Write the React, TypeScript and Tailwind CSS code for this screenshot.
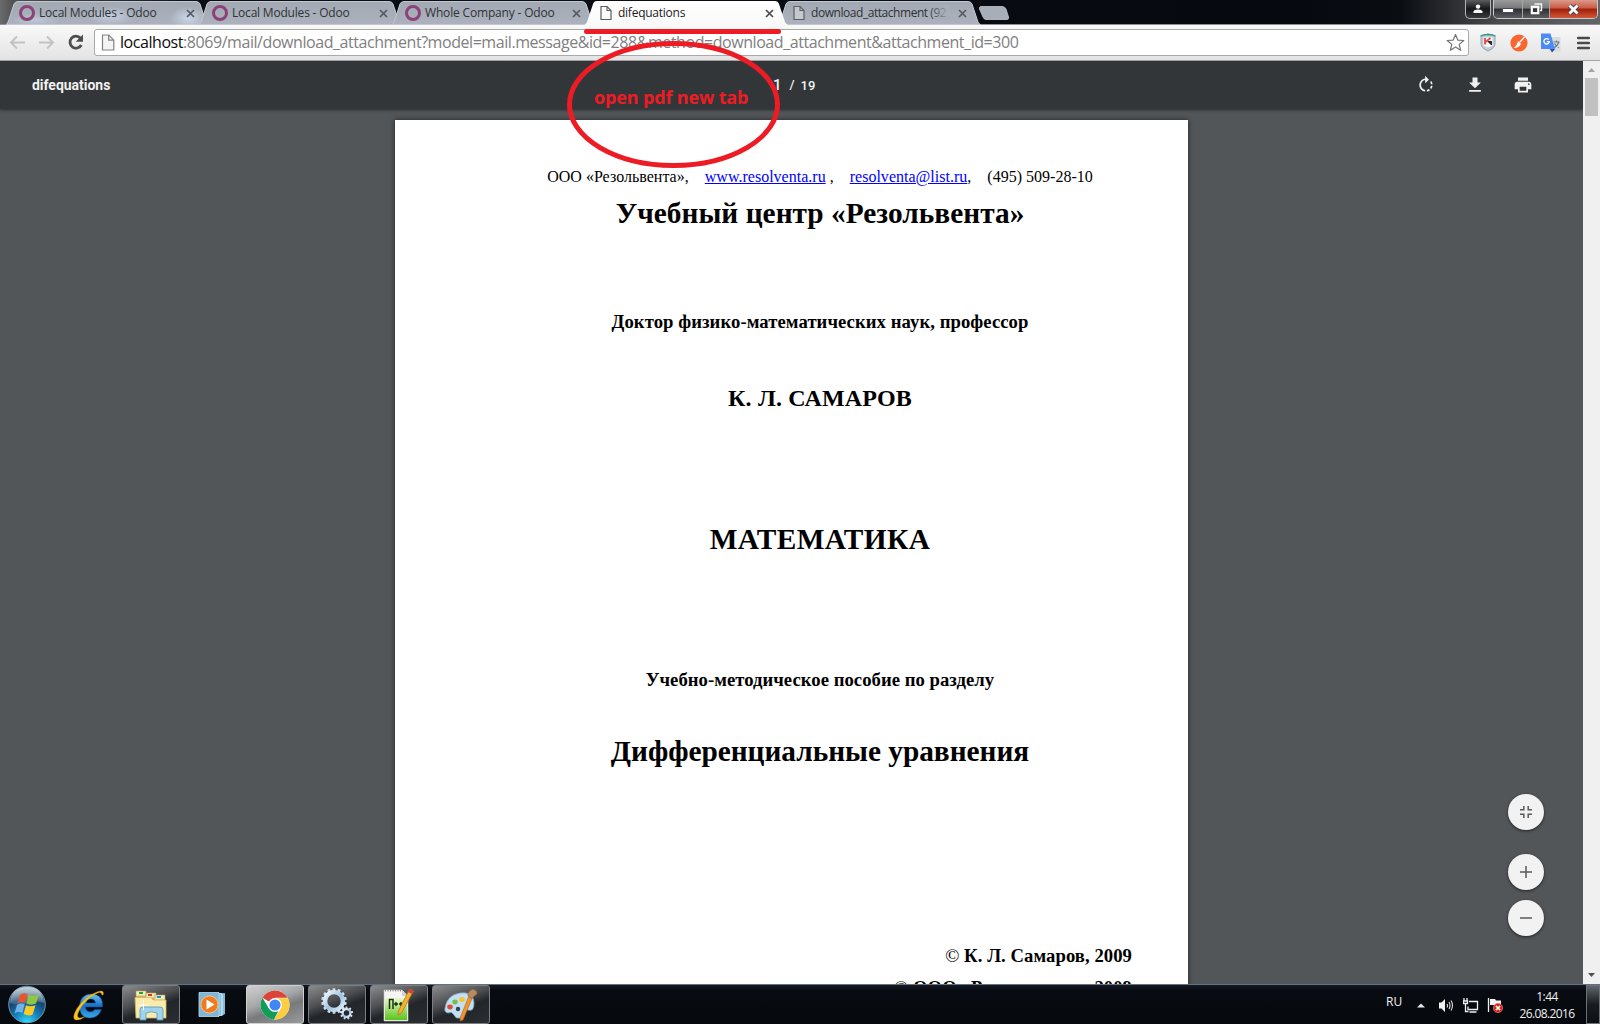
import React from "react";

const UI = "font-['Open_Sans',sans-serif]";

function FileIcon({ className = "" }: { className?: string }) {
  return (
    <svg width="12" height="16" viewBox="0 0 12 16" className={className}>
      <path d="M1 1.500h6l4 4v9H1z" fill="#fafafa" fillOpacity=".35" stroke="#5d5d5d" strokeWidth="1.2" />
      <path d="M7 1.500v4h4" fill="none" stroke="#5d5d5d" strokeWidth="1.100" />
    </svg>
  );
}

function Close({ color }: { color: string }) {
  return (
    <svg width="9" height="9" viewBox="0 0 9 9" className="shrink-0">
      <path d="M1 1l7 7M8 1L1 8" stroke={color} strokeWidth="1.700" />
    </svg>
  );
}

type TabProps = { title: string; kind: "odoo" | "file"; active?: boolean; fade?: boolean; light?: boolean; tracking: string };

function Tab({ title, kind, active, fade, light, tracking }: TabProps) {
  return (
    <div className={"relative h-[24px] w-[193px] shrink-0 " + (active ? "z-10" : "")}>
      <svg width="203" height="25" viewBox="0 0 203 25" className="absolute top-0 left-0">
        <defs>
          <linearGradient id="tabIdle" x1="0" y1="0" x2="0" y2="1">
            <stop offset="0" stopColor="#a3a9b3" />
            <stop offset="1" stopColor="#acb2bd" />
          </linearGradient>
          <linearGradient id="tabActive" x1="0" y1="0" x2="0" y2="1">
            <stop offset="0" stopColor="#ffffff" />
            <stop offset="1" stopColor="#f9f9f9" />
          </linearGradient>
          <radialGradient id="tabGlow">
            <stop offset="0" stopColor="#c9d6e8" />
            <stop offset="1" stopColor="#c9d6e8" stopOpacity="0" />
          </radialGradient>
        </defs>
        <path
          d={
            active
              ? "M-1 25Q1 24 2 22L8 4Q9 1 12 1H190Q193 1 194 4L200 22Q201 24 203 25Z"
              : "M0 24.500Q1.500 23.500 2.500 21L8 4Q9 1.500 12 1.500H190Q193 1.500 194 4L200 22Q201 24 202.500 24.500Z"
          }
          fill={active ? "url(#tabActive)" : "url(#tabIdle)"}
          stroke={active ? "none" : "#c3c8d0"}
          strokeWidth="1"
        />
        {light && (
          <g>
            <ellipse cx="30" cy="20" rx="24" ry="7" fill="url(#tabGlow)" opacity=".6" />
            <ellipse cx="105" cy="16" rx="24" ry="9" fill="url(#tabGlow)" opacity=".8" />
            <ellipse cx="182" cy="18" rx="18" ry="11" fill="url(#tabGlow)" />
          </g>
        )}
      </svg>
      <div className="relative flex h-[24px] items-center pt-[2px] pl-[13px]">
        {kind === "odoo" ? (
          <span className="h-[16px] w-[16px] shrink-0 rounded-full border-[3.500px] border-[#8b4278]" />
        ) : (
          <FileIcon className="mx-[2px] shrink-0" />
        )}
        <span
          className={
            "relative ml-[4px] w-[139px] text-[12px] leading-[16px] whitespace-nowrap " + UI + " " + tracking + (active ? " text-[#1c1c1c]" : " text-[#2f3236]")
          }
        >
          {title}
          {fade && <span className="absolute top-0 right-0 h-full w-[22px] bg-gradient-to-r from-transparent to-[#a8aeb8]" />}
        </span>
        <span className="ml-[8px] flex">
          <Close color={active ? "#4c4c4c" : "#565960"} />
        </span>
      </div>
    </div>
  );
}

function WindowControls() {
  return (
    <div className="absolute top-0 right-[2px] flex h-[19px] gap-[2px]">
      <div className="flex h-[19px] w-[26px] items-center justify-center rounded-b-[5px] border border-t-0 border-[#b5b5b5] bg-gradient-to-b from-[#5c5d5f] via-[#15171a] to-[#3b3d40]">
        <svg width="10" height="10" viewBox="0 0 10 10">
          <circle cx="5" cy="2.600" r="2.200" fill="#fff" />
          <path d="M.5 9V7.500Q1 5.500 5 5.500T9.500 7.500V9z" fill="#fff" />
        </svg>
      </div>
      <div className="flex h-[19px] w-[105px] overflow-hidden rounded-b-[5px] border border-t-0 border-[#c9c9c9]">
        <div className="flex w-[29px] items-center justify-center border-r border-[#a5a5a5] bg-[linear-gradient(180deg,#9b9b9b_0%,#77787a_45%,#2c2d30_50%,#5c5e60_100%)]">
          <span className="mt-[3px] h-[5px] w-[12px] rounded-[1px] border border-[#444a5c] bg-white" />
        </div>
        <div className="flex w-[27px] items-center justify-center border-r border-[#a5a5a5] bg-[linear-gradient(180deg,#9b9b9b_0%,#77787a_45%,#2c2d30_50%,#5c5e60_100%)]">
          <svg width="13" height="12" viewBox="0 0 13 12">
            <path d="M4.500 1h7v6.500H10" fill="none" stroke="#f5f5f5" strokeWidth="1.400" />
            <rect x="1.800" y="3.800" width="6.500" height="6.400" fill="none" stroke="#fff" strokeWidth="2.200" />
          </svg>
        </div>
        <div className="flex grow items-center justify-center bg-[linear-gradient(180deg,#dc9a8c_0%,#c85a44_45%,#a01f08_50%,#d0573b_100%)]">
          <svg width="13" height="11" viewBox="0 0 13 11">
            <path d="M2.500 1.500l8 8M10.500 1.500l-8 8" stroke="#4d4450" strokeWidth="4.600" />
            <path d="M2.500 1.500l8 8M10.500 1.500l-8 8" stroke="#fff" strokeWidth="2.800" />
          </svg>
        </div>
      </div>
    </div>
  );
}

function TabStrip() {
  return (
    <div className="relative flex h-[24px] shrink-0 bg-[linear-gradient(90deg,#6a6b6c_0px,#4f5052_14px,#0a0e15_200px,#060a10_1300px,#0a0d12_1400px,#4a4b4d_1500px,#626466_1600px)] pl-[6px]">
      <Tab title="Local Modules - Odoo" kind="odoo" light tracking="tracking-[-0.2px]" />
      <Tab title="Local Modules - Odoo" kind="odoo" tracking="tracking-[-0.2px]" />
      <Tab title="Whole Company - Odoo" kind="odoo" tracking="tracking-[-0.17px]" />
      <Tab title="difequations" kind="file" active tracking="tracking-[-0.25px]" />
      <Tab title="download_attachment (92" kind="file" fade tracking="tracking-[-0.45px]" />
      <svg width="32" height="16" viewBox="0 0 32 16" className="mt-[5px] ml-[7px]">
        <path d="M3 1.500H24Q27 1.500 28 4L30.500 12Q31 14.500 29 14.500H8Q6 14.500 5 12L1.500 4Q1 1.500 3 1.500Z" fill="#a8aeb8" stroke="#c0c5cd" strokeWidth=".8" />
      </svg>
      <WindowControls />
    </div>
  );
}

function AddressBar() {
  return (
    <div className="flex h-[37px] shrink-0 items-center border-t border-b border-t-[#8d8f92] border-b-[#a3a3a3] bg-gradient-to-b from-[#f9f9f9] to-[#e3e3e3]">
      <svg width="94" height="35" viewBox="0 0 94 35" className="shrink-0">
        <g fill="none" stroke="#c3c3c3" strokeWidth="2">
          <path d="M25 17.500H11.500M17 11.500l-6 6 6 6" />
          <path d="M39 17.500h13.500M47 11.500l6 6-6 6" />
        </g>
        <path d="M80.500 13.200A6 6 0 1 0 81.300 20" fill="none" stroke="#4d4d4d" strokeWidth="2.800" />
        <path d="M83 9.500v7.200h-7.300z" fill="#4d4d4d" />
      </svg>
      <div className="flex h-[27px] w-[1375px] shrink-0 items-center rounded-[3px] border border-[#a9a9a9] bg-white pr-[3px] pl-[6px]">
        <svg width="14" height="17" viewBox="0 0 14 17" className="shrink-0">
          <path d="M1.500 1h6.300l5 5.200V16h-11.300z" fill="#f4f4f4" stroke="#828282" strokeWidth="1.200" />
          <path d="M7.700 1v5.200h5" fill="none" stroke="#828282" strokeWidth="1.200" />
        </svg>
        <span className={"-mt-px ml-[5px] grow text-[16px] leading-[24px] tracking-[-0.440px] whitespace-nowrap text-[#808080] " + UI}>
          <span className="text-[#0c0c0c]">localhost</span>:8069/mail/download_attachment?model=mail.message&amp;id=288&amp;method=download_attachment&amp;attachment_id=300
        </span>
        <svg width="19" height="19" viewBox="0 0 19 19" className="shrink-0">
          <path d="M9.500 1.500l2.300 5.600 6 .4-4.600 3.900 1.500 5.900-5.200-3.200-5.200 3.200 1.500-5.900L1.200 7.500l6-.4z" fill="#fff" stroke="#747474" strokeWidth="1.200" strokeLinejoin="round" />
        </svg>
      </div>
      <svg width="16" height="19" viewBox="0 0 16 19" className="ml-[11px] shrink-0">
        <path d="M1 2.500Q8-.5 15 2.500V11Q15 15 8 18Q1 15 1 11z" fill="#c3cdd3" stroke="#8b9ba3" strokeWidth=".8" />
        <path d="M.5 2.500Q8-1 15.500 2.500V3.500Q8 1 .5 3.500z" fill="#1c9a87" />
        <path d="M3.500 4.500h9v8l-4.500 2-4.500-2z" fill="#fbfbfb" />
        <path d="M5 5v6.500M10.500 5L5.500 9" fill="none" stroke="#e8454a" strokeWidth="1.800" />
        <path d="M8 8.500h3.500v3.500z" fill="#222" stroke="#222" />
      </svg>
      <svg width="18" height="18" viewBox="0 0 18 18" className="ml-[14px] shrink-0">
        <circle cx="9" cy="9" r="8.600" fill="#fb6530" />
        <path d="M14.500 3L9.500 8.500" stroke="#fff" strokeWidth="1.300" />
        <path d="M8 7l3 3Q9.500 14 3.500 14Q7 12 8 7z" fill="#fff" />
      </svg>
      <svg width="20" height="20" viewBox="0 0 20 20" className="ml-[13px] shrink-0">
        <rect x="8" y="4" width="11.500" height="14.500" fill="#dcdcdc" />
        <path d="M12.500 9h6M15.500 7.500V9M18 9q-1.500 4-5 6M13.500 10.500q2 3 4.500 4" fill="none" stroke="#607d8b" strokeWidth="1.200" />
        <path d="M0 .5h9.500l4.500 15.500H0z" fill="#4c8bf5" />
        <path d="M9 16h5l-3 3.500z" fill="#3048b0" />
        <path d="M7.800 6.700a2.700 2.700 0 1 0 .5 2H5.800" fill="none" stroke="#fff" strokeWidth="1.300" />
      </svg>
      <svg width="13" height="14" viewBox="0 0 13 14" className="ml-[16px] shrink-0">
        <path d="M1 2h11M1 7h11M1 12h11" stroke="#4a4a4a" strokeWidth="2.500" strokeLinecap="round" />
      </svg>
    </div>
  );
}

function ViewerToolbar() {
  return (
    <div className="relative z-10 flex h-[48px] shrink-0 items-center bg-[#323639] font-['Roboto',sans-serif] font-bold text-[#f1f1f1] shadow-[0_1px_3px_rgba(0,0,0,0.5)]">
      <span className="w-[773px] pl-[32px] text-[14px] leading-[20px] tracking-[-0.020px]">difequations</span>
      <span className="text-[15px] leading-[20px] font-medium">1</span>
      <span className="ml-[8px] text-[13px] font-medium">/</span>
      <span className="ml-[6px] grow pt-px text-[13px] font-medium">19</span>
      <svg width="20" height="20" viewBox="0 0 24 24" className="mr-[29px]" fill="#f1f1f1">
        <path d="M15.550 5.550L11 1v3.070C7.060 4.560 4 7.920 4 12s3.050 7.440 7 7.930v-2.020c-2.840-.48-5-2.940-5-5.910s2.160-5.430 5-5.910V10l4.550-4.450zM19.930 11c-.17-1.390-.72-2.730-1.620-3.890l-1.420 1.420c.54.75.88 1.600 1.020 2.470h2.020zM13 17.900v2.020c1.390-.17 2.740-.71 3.900-1.610l-1.440-1.440c-.75.54-1.590.89-2.460 1.030zm3.890-2.420l1.420 1.410c.9-1.160 1.450-2.500 1.620-3.890h-2.020c-.14.87-.48 1.720-1.020 2.480z" />
      </svg>
      <svg width="20" height="20" viewBox="0 0 24 24" className="mr-[28px]" fill="#f1f1f1">
        <path d="M19 9h-4V3H9v6H5l7 7 7-7zM5 18v2h14v-2H5z" />
      </svg>
      <svg width="20" height="20" viewBox="0 0 24 24" className="mr-[50px]" fill="#f1f1f1">
        <path d="M19 8H5c-1.660 0-3 1.340-3 3v6h4v4h12v-4h4v-6c0-1.660-1.340-3-3-3zm-3 11H8v-5h8v5zm3-7c-.55 0-1-.45-1-1s.45-1 1-1 1 .45 1 1-.45 1-1 1zm-1-9H6v4h12V3z" />
      </svg>
    </div>
  );
}

function Document() {
  return (
    <div className="mt-[11px] ml-[395px] h-[880px] w-[793px] bg-white pt-[41px] pr-[56px] pl-[113px] text-center font-['Liberation_Serif',serif] leading-[32px] whitespace-nowrap text-black shadow-[0_0_5px_rgba(0,0,0,0.6)]">
      <div className="h-8 text-[16px] tracking-[0.01px] whitespace-pre">
        {"ООО «Резольвента»,    "}
        <a className="text-[#0000ff] underline">www.resolventa.ru</a>
        {" ,    "}
        <a className="text-[#0000ff] underline">resolventa@list.ru</a>
        {",    (495) 509-28-10"}
      </div>
      <div className="mt-[4px] h-8 text-[29.330px] font-bold tracking-[0.03px]">Учебный центр «Резольвента»</div>
      <div className="mt-[77px] h-8 text-[18.670px] font-bold tracking-[0.07px]">Доктор физико-математических наук, профессор</div>
      <div className="mt-[44px] h-8 text-[24px] font-bold tracking-[0.15px]">К. Л. САМАРОВ</div>
      <div className="mt-[109px] h-8 text-[29.330px] font-bold tracking-[0.4px]">МАТЕМАТИКА</div>
      <div className="mt-[109px] h-8 text-[18.670px] font-bold tracking-[0.04px]">Учебно-методическое пособие по разделу</div>
      <div className="mt-[39px] h-8 text-[29.330px] font-bold tracking-[-0.02px]">Дифференциальные уравнения</div>
      <div className="mt-[173px] h-8 text-right text-[18.670px] font-bold tracking-[0.06px]">
        <span className="font-normal">©</span> К. Л. Самаров, 2009
      </div>
      <div className="h-8 text-right text-[18.670px] font-bold tracking-[0.06px]">
        <span className="font-normal">©</span> ООО «Резольвента», 2009
      </div>
    </div>
  );
}

function ZoomButtons() {
  const base = "flex h-[36px] w-[36px] items-center justify-center rounded-full bg-[#f2f2f2] shadow-[0_1px_3px_rgba(0,0,0,0.6)]";
  return (
    <div className="absolute top-[733px] left-[1508px] flex flex-col">
      <div className={base}>
        <svg width="12" height="12" viewBox="0 0 12 12" fill="none" stroke="#5a5a5a" strokeWidth="1.500">
          <path d="M0 3.800h3.800V0M8.200 0v3.800H12M0 8.200h3.800V12M8.200 12V8.200H12" />
        </svg>
      </div>
      <div className={base + " mt-[24px]"}>
        <svg width="12" height="12" viewBox="0 0 12 12" stroke="#5a5a5a" strokeWidth="1.500">
          <path d="M6 0v12M0 6h12" />
        </svg>
      </div>
      <div className={base + " mt-[10px]"}>
        <svg width="12" height="12" viewBox="0 0 12 12" stroke="#5a5a5a" strokeWidth="1.500">
          <path d="M0 6h12" />
        </svg>
      </div>
    </div>
  );
}

function Scrollbar() {
  return (
    <div className="flex w-[17px] shrink-0 flex-col items-center bg-[#f0f0f0]">
      <svg width="17" height="17" viewBox="0 0 17 17">
        <path d="M5 11l3.500-4 3.500 4z" fill="#a3a3a3" />
      </svg>
      <div className="h-[38px] w-[13px] bg-[#c1c1c1]" />
      <svg width="17" height="17" viewBox="0 0 17 17" className="mt-auto">
        <path d="M5 6l3.500 4L12 6z" fill="#505050" />
      </svg>
    </div>
  );
}

function Slot({ children, bright }: { children: React.ReactNode; bright?: boolean }) {
  return (
    <div
      className={
        "flex h-[39px] w-[58px] shrink-0 items-center justify-center rounded-[3px] border " +
        (bright
          ? "border-[#d0d0d0] bg-[linear-gradient(160deg,#d0d0d0_0%,#a6a7a8_40%,#77797a_60%,#989a9b_100%)]"
          : "border-[#7c7e81] bg-[linear-gradient(160deg,#8b8c8e_0%,#4a4c4f_40%,#22262a_58%,#2a2e31_100%)]")
      }
    >
      {children}
    </div>
  );
}

type GearProps = { cx: number; cy: number; r: number; ring: number; teeth: number; tooth: number };

function Gear({ cx, cy, r, ring, teeth, tooth }: GearProps) {
  const angles = Array.from({ length: teeth }, (_, i) => (i * 360) / teeth);
  return (
    <g>
      {angles.map((a) => (
        <rect key={a} x={cx - tooth / 2} y={cy - r} width={tooth} height={ring} rx=".5" fill="#cfe0ec" transform={`rotate(${a} ${cx} ${cy})`} />
      ))}
      <circle cx={cx} cy={cy} r={r - ring / 2 - 1.2} fill="none" stroke="url(#gearFill)" strokeWidth={ring - 1} />
    </g>
  );
}

function Taskbar() {
  return (
    <div className={"relative z-20 flex h-[40px] shrink-0 items-center border-t border-[#64707c] bg-[linear-gradient(180deg,#141923_0%,#080b11_15%,#05080c_100%)] text-[#f0f0f0] " + UI}>
      <svg width="40" height="39" viewBox="0 0 40 39" className="ml-[7px] shrink-0">
        <defs>
          <radialGradient id="orb" cx=".5" cy="1" r=".95">
            <stop offset="0" stopColor="#37e0ff" />
            <stop offset=".35" stopColor="#1585c2" />
            <stop offset=".7" stopColor="#16446f" />
            <stop offset="1" stopColor="#5d8096" />
          </radialGradient>
          <linearGradient id="gloss" x1="0" y1="0" x2="0" y2="1">
            <stop offset="0" stopColor="#fff" stopOpacity=".65" />
            <stop offset="1" stopColor="#fff" stopOpacity=".12" />
          </linearGradient>
        </defs>
        <circle cx="20" cy="19.500" r="18.300" fill="url(#orb)" stroke="#6f97ad" strokeWidth="1" />
        <path d="M3 18Q4 2 20 2T37 18Q28 15 20 18T3 18z" fill="url(#gloss)" />
        <path d="M13 10Q17 7 20.500 9.200L18 18Q14 16 10.500 18.500z" fill="#e8552c" />
        <path d="M21.500 9.800Q26 12 32 9.500L29 18.500Q24 20.800 19.400 18.500z" fill="#8fc73e" />
        <path d="M10 20Q14 17.500 17.700 19.500L15.200 28Q11.500 26 7.500 28.500z" fill="#6fb3ea" />
        <path d="M19 20.200Q23.500 22.500 28.500 20.200L25.700 29.500Q21.500 31.500 16.600 29z" fill="#fcc927" />
      </svg>
      <svg width="36" height="36" viewBox="0 0 36 36" className="ml-[24px] shrink-0">
        <defs>
          <linearGradient id="ie" x1="0" y1="0" x2="0" y2="1">
            <stop offset="0" stopColor="#6cc4f4" />
            <stop offset=".5" stopColor="#176fc4" />
            <stop offset="1" stopColor="#38a8ec" />
          </linearGradient>
        </defs>
        <path d="M31.500 20H14.500Q14.800 24.800 19.300 24.800Q22.500 24.800 23.700 22.500H30.500Q27.500 31 18.500 31Q8.500 30.500 8.500 19.500Q9 7.500 20.500 7Q32.500 7.500 31.500 20zM15 16H24.500Q24 12 19.800 12T15 16z" fill="url(#ie)" stroke="#0d4a90" strokeWidth=".5" />
        <path d="M32 8Q34 2 26 5Q14 9.500 6 21.500Q0 32 5 33Q9 33.500 14 29.500Q7 32.500 6.500 29Q6.500 25 12 17.500Q20 8 28 5.500Q31 5 31 8z" fill="#f8c41c" stroke="#d49708" strokeWidth=".4" />
      </svg>
      <div className="ml-[15px] flex">
        <Slot>
          <svg width="34" height="32" viewBox="0 0 34 32">
            <path d="M2 4h9l2 2h18v22H2z" fill="#d9b75c" />
            <path d="M2 2h10v5H2zM12 4h10v5H12zM20 6h11v5H20z" fill="#f6eebb" stroke="#bca052" strokeWidth=".6" />
            <path d="M5 3h4v2H5z" fill="#1ea63a" />
            <path d="M14 5h4v2h-4z" fill="#d03620" />
            <path d="M23 7h4v2h-4z" fill="#2a88dc" />
            <path d="M1 8.500h16l2 2.500h13V29H2z" fill="#f9ebab" stroke="#d8b85c" strokeWidth=".8" />
            <path d="M6 31V20.500Q6 18 9 18H26Q29 18 29 20.500V31H23V24Q17.500 21.500 12 24V31z" fill="#9fd3ee" stroke="#5097c0" strokeWidth=".8" />
            <path d="M9.500 11v10M4.500 16h10" stroke="#fff" strokeWidth="1" />
          </svg>
        </Slot>
      </div>
      <svg width="28" height="28" viewBox="0 0 28 28" className="ml-[18px] shrink-0">
        <path d="M8 2h19v21l-3 2H8z" fill="#5e9fc4" />
        <path d="M6 2.500h17.500v22H6zM24.500 3v21M26 3v20" fill="#88bfdd" stroke="#c4e4f3" strokeWidth=".8" />
        <path d="M1 1.500h20v24H1z" fill="#7db6d8" stroke="#b5dcf0" strokeWidth=".8" />
        <circle cx="11.500" cy="13.500" r="8.600" fill="#f07a1e" stroke="#ffc490" strokeWidth="1" />
        <path d="M8.500 8.500l8 5-8 5z" fill="#fff" />
      </svg>
      <div className="ml-[20px] flex gap-[4px]">
        <Slot bright>
          <svg width="30" height="30" viewBox="0 0 30 30">
            <circle cx="15" cy="15" r="14.500" fill="#fff" />
            <path d="M15 15L2.443 7.750A14.500 14.500 0 0 1 27.557 7.750H15z" fill="#db4437" />
            <path d="M27.800 8.200H15L19.500 20.500 14 29.470A14.500 14.500 0 0 0 27.800 8.200z" fill="#ffcd40" />
            <path d="M2.400 7.800L9 18.500Q12 22 18.800 20.300L14 29.470A14.500 14.500 0 0 1 2.400 7.800z" fill="#0f9d58" />
            <circle cx="15" cy="15" r="6.900" fill="#fff" />
            <circle cx="15" cy="15" r="5.600" fill="#4285f4" />
          </svg>
        </Slot>
        <Slot>
          <svg width="34" height="34" viewBox="0 0 34 34">
            <defs>
              <linearGradient id="gearFill" x1="0" y1="0" x2="1" y2="1">
                <stop offset="0" stopColor="#f4f9fc" />
                <stop offset=".55" stopColor="#9cc3e2" />
                <stop offset="1" stopColor="#e4eff6" />
              </linearGradient>
            </defs>
            <Gear cx={14} cy={13} r={12.8} ring={5.4} teeth={14} tooth={2.8} />
            <Gear cx={26.500} cy={25} r={6.600} ring={3.200} teeth={9} tooth={2} />
          </svg>
        </Slot>
        <Slot>
          <svg width="34" height="36" viewBox="0 0 34 36">
            <defs>
              <linearGradient id="npp" x1="0" y1="0" x2="0" y2="1">
                <stop offset="0" stopColor="#e8f8c8" />
                <stop offset="1" stopColor="#5ac51c" />
              </linearGradient>
            </defs>
            <path d="M2 3h18l6 6v25H2z" fill="#f5f6f4" stroke="#c5c8c4" strokeWidth=".6" />
            <path d="M3 11h22v22H3z" fill="url(#npp)" />
            <path d="M3 3.500h16" stroke="#8a8a8a" strokeWidth="2" strokeDasharray="1 1.500" />
            <path d="M20 3v6h6z" fill="#cfd2d0" />
            <path d="M7.500 22V12.500h3.500V22M12 17h4M14 15v4M17 17h4M19 15v4" fill="none" stroke="#1c3010" strokeWidth="1.500" />
            <path d="M27.500 2l4 2-12 22-3.500 2 .5-4z" fill="#f1b330" stroke="#a87010" strokeWidth=".7" />
            <path d="M27.500 2l4 2-1.500 3-4-2z" fill="#d83d3a" />
          </svg>
        </Slot>
        <Slot>
          <svg width="34" height="34" viewBox="0 0 34 34">
            <path d="M1 20Q3 7 16 5T30 15Q30 24 24 22Q19 21 20 26T15 30Q12 31 10 27T4 25Q0 24 1 20z" fill="#c4dff0" stroke="#7fa9c6" strokeWidth=".8" />
            <ellipse cx="6" cy="19" rx="2.800" ry="2.400" fill="#e04a3a" />
            <ellipse cx="11" cy="14" rx="2.700" ry="2.400" fill="#6ec04a" />
            <ellipse cx="18" cy="11.500" rx="2.900" ry="2.500" fill="#f5c62c" />
            <circle cx="14" cy="21" r="2.200" fill="#2d4254" />
            <path d="M24.500 9l3.500 1.500L19 32l-3 1 .5-4z" fill="#ee9430" stroke="#b5621a" strokeWidth=".6" />
            <path d="M24 8Q23 3 29 1Q34 3 33 6Q30 8 28 10.500z" fill="#b98a5c" stroke="#7d5832" strokeWidth=".5" />
          </svg>
        </Slot>
      </div>
      <div className="ml-auto flex h-full items-center">
        <span className="mb-[5px] w-[17px] text-[12px] leading-[16px]">RU</span>
        <svg width="8" height="5" viewBox="0 0 8 5" className="mt-[1px] ml-[14px]">
          <path d="M0 4.500L4 .5l4 4z" fill="#e8e8e8" />
        </svg>
        <svg width="16" height="16" viewBox="0 0 16 16" className="ml-[13px]">
          <path d="M1 5.500h2.500L7 2v13L3.500 11.500H1z" fill="#f2f2f2" />
          <path d="M9 7q1 1.700 0 3.500M11 5q2 3.500 0 7M13 3.500q3 5 0 10" fill="none" stroke="#dcdcdc" strokeWidth="1.100" />
        </svg>
        <svg width="16" height="16" viewBox="0 0 16 16" className="ml-[9px]" fill="none" stroke="#f0f0f0">
          <path d="M6 4.500h8.500v8H5V9.500M6.500 15h7M2.500 7v7.500h3" strokeWidth="1.300" />
          <path d="M1 1v2.500M4 1v2.500M.5 4h4v2.500h-4z" strokeWidth="1.300" />
        </svg>
        <svg width="16" height="16" viewBox="0 0 16 16" className="ml-[8px]">
          <path d="M1.500 1v14" stroke="#f2f2f2" strokeWidth="1.300" />
          <path d="M3 2h5l1 1.500h5V9H8L7 8H3z" fill="#f2f2f2" />
          <circle cx="11" cy="11" r="4.700" fill="#d8281c" stroke="#f09088" strokeWidth=".6" />
          <path d="M9 9l4 4M13 9l-4 4" stroke="#fff" strokeWidth="1.700" />
        </svg>
        <div className="ml-[10px] flex w-[68px] flex-col items-center text-[12px] leading-[17px] tracking-[-0.6px] whitespace-nowrap">
          <span>1:44</span>
          <span>26.08.2016</span>
        </div>
        <div className="ml-[5px] h-full w-[14px] border border-[#6b7176] bg-gradient-to-b from-[#60666b] via-[#181c20] to-[#0c1014]" />
      </div>
    </div>
  );
}

function Annotations() {
  return (
    <div className="pointer-events-none absolute top-0 left-0 z-30 h-[180px] w-[800px]">
      <svg width="800" height="180" viewBox="0 0 800 180" fill="none" stroke="#ed1c24" strokeWidth="5" className="absolute top-0 left-0">
        <path d="M586.500 31.500H778.500" strokeLinecap="round" />
        <ellipse cx="673.500" cy="104.500" rx="104" ry="61" />
      </svg>
      <span className={"absolute top-[85px] left-[594px] text-[18px] leading-[24px] font-bold tracking-[-0.150px] whitespace-nowrap text-[#ed1c24] " + UI}>open pdf new tab</span>
    </div>
  );
}

export default function App() {
  return (
    <div className="relative flex h-[1024px] w-[1600px] flex-col overflow-hidden bg-[#525659]">
      <TabStrip />
      <AddressBar />
      <div className="flex min-h-0 grow">
        <div className="relative flex grow flex-col overflow-hidden">
          <ViewerToolbar />
          <Document />
          <ZoomButtons />
        </div>
        <Scrollbar />
      </div>
      <Taskbar />
      <Annotations />
    </div>
  );
}
